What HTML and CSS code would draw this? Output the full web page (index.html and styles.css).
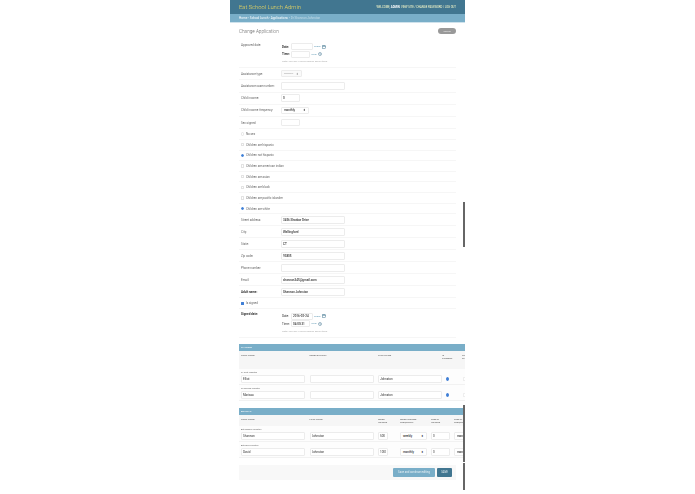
FILE: index.html
```html
<!DOCTYPE html>
<html lang="en">
<head>
    <meta charset="UTF-8">
    <title>Change Application</title>
    <link rel="stylesheet" href="styles.css">
</head>
<body>
    <div class="page">
        <div class="header">
            <div class="branding">Eat School Lunch Admin</div>
            <div class="user-tools">WELCOME, <b>ADMIN</b>. VIEW SITE / CHANGE PASSWORD / LOG OUT</div>
        </div>
        <div class="breadcrumbs"><span>Home › School Lunch › Applications ›</span> Dr Shannon Johnston</div>
        <div class="content">
            <div class="title-row">
                <h1>Change Application</h1>
                <span class="history">HISTORY</span>
            </div>

            <div class="row date-row">
                <label>Approved date:</label>
                <div class="datetime">
                    <div class="dt-line"><b>Date:</b><input class="dt-input" value=""><a>Today</a>
                        <svg class="dt-icon" viewBox="0 0 16 16"><rect x="2" y="3" width="12" height="11" fill="none" stroke="#417690" stroke-width="2"/><path d="M2 6h12M5 1v3M11 1v3" stroke="#417690" stroke-width="2"/></svg>
                    </div>
                    <div class="dt-line"><b>Time:</b><input class="dt-input short" value=""><a>Now</a>
                        <svg class="dt-icon" viewBox="0 0 16 16"><circle cx="8" cy="8" r="6" fill="none" stroke="#417690" stroke-width="2"/><path d="M8 4v4l3 2" fill="none" stroke="#417690" stroke-width="1.5"/></svg>
                    </div>
                    <div class="help">Note: You are 7 hours behind server time.</div>
                </div>
            </div>
            <div class="row"><label>Assistance type:</label><div class="select pale w21"><span>---------</span><i>⬍</i></div></div>
            <div class="row"><label>Assistance case number:</label><input class="w64"></div>
            <div class="row"><label>Child income:</label><input class="w19 strong" value="0"></div>
            <div class="row"><label>Child income frequency:</label><div class="select w28"><span>monthly</span><i>⬍</i></div></div>
            <div class="row"><label>Sex signed:</label><input class="w19"></div>

            <div class="row check-row"><span class="radio"></span>No sex</div>
            <div class="row check-row"><span class="box"></span>Children are hispanic</div>
            <div class="row check-row"><span class="radio on"></span>Children not hispanic</div>
            <div class="row check-row"><span class="box"></span>Children are american indian</div>
            <div class="row check-row"><span class="box"></span>Children are asian</div>
            <div class="row check-row"><span class="box"></span>Children are black</div>
            <div class="row check-row"><span class="box"></span>Children are pacific islander</div>
            <div class="row check-row"><span class="radio on"></span>Children are white</div>

            <div class="row tight"><label>Street address:</label><input class="w64 strong" value="3456 Shadow Drive"></div>
            <div class="row tight"><label>City:</label><input class="w64 strong" value="Wallingford"></div>
            <div class="row tight"><label>State:</label><input class="w64 strong" value="CT"></div>
            <div class="row tight"><label>Zip code:</label><input class="w64 strong" value="93805"></div>
            <div class="row tight"><label>Phone number:</label><input class="w64"></div>
            <div class="row tight"><label>Email:</label><input class="w64 strong" value="shannon345@gmail.com"></div>
            <div class="row tight"><label class="required">Adult name:</label><input class="w64 strong" value="Shannon Johnston"></div>
            <div class="row check-row signed-row"><span class="box on"></span>Is signed</div>
            <div class="row date-row signed">
                <label class="required">Signed date:</label>
                <div class="datetime">
                    <div class="dt-line"><span>Date:</span><input class="dt-input strong" value="2016-02-24"><a>Today</a>
                        <svg class="dt-icon" viewBox="0 0 16 16"><rect x="2" y="3" width="12" height="11" fill="none" stroke="#417690" stroke-width="2"/><path d="M2 6h12M5 1v3M11 1v3" stroke="#417690" stroke-width="2"/></svg>
                    </div>
                    <div class="dt-line"><span>Time:</span><input class="dt-input short strong" value="04:00:31"><a>Now</a>
                        <svg class="dt-icon" viewBox="0 0 16 16"><circle cx="8" cy="8" r="6" fill="none" stroke="#417690" stroke-width="2"/><path d="M8 4v4l3 2" fill="none" stroke="#417690" stroke-width="1.5"/></svg>
                    </div>
                    <div class="help">Note: You are 7 hours behind server time.</div>
                </div>
            </div>

            <div class="inline children">
                <h2>CHILDREN</h2>
                <div class="thead">
                    <span>FIRST NAME</span><span>MIDDLE INITIAL</span><span>LAST NAME</span><span>IS<br>STUDENT</span><span>FOSTER<br>CHILD</span>
                </div>
                <div class="item">
                    <div class="item-title">#1 Elliot Johnston</div>
                    <div class="cells">
                        <input value="Elliot"><input><input value="Johnston"><span class="cell-dot"><span class="radio on"></span></span><span class="cell-dot"><span class="box"></span></span>
                    </div>
                </div>
                <div class="item">
                    <div class="item-title">#2 Marissa Johnston</div>
                    <div class="cells">
                        <input value="Marissa"><input><input value="Johnston"><span class="cell-dot"><span class="radio on"></span></span><span class="cell-dot"><span class="box"></span></span>
                    </div>
                </div>
            </div>

            <div class="inline adults">
                <h2>ADULT FS</h2>
                <div class="thead">
                    <span>FIRST NAME</span><span>LAST NAME</span><span>WORK<br>INCOME</span><span>WORK INCOME<br>FREQUENCY</span><span>PUBLIC<br>INCOME</span><span>PUBLIC INCOME<br>FREQUENCY</span>
                </div>
                <div class="item">
                    <div class="item-title">Adt Shannon Johnston</div>
                    <div class="cells">
                        <input value="Shannon"><input value="Johnston"><input value="500"><div class="select"><span>weekly</span><i>⬍</i></div><input value="0"><div class="select"><span>monthly</span><i>⬍</i></div>
                    </div>
                </div>
                <div class="item">
                    <div class="item-title">Adt David Johnston</div>
                    <div class="cells">
                        <input value="David"><input value="Johnston"><input value="1000"><div class="select"><span>monthly</span><i>⬍</i></div><input value="0"><div class="select"><span>monthly</span><i>⬍</i></div>
                    </div>
                </div>
            </div>

            <div class="submit-row">
                <span class="btn light">Save and continue editing</span>
                <span class="btn dark">SAVE</span>
            </div>
        </div>
    </div>
    <div class="scroll-mark one"></div>
    <div class="scroll-mark two"></div>
    <div class="scroll-mark three"></div>
</body>
</html>
```

FILE: styles.css
```css
* {
    box-sizing: border-box;
}
body {
    margin: 0;
    background: #fff;
    height: 494px;
    overflow: hidden;
    font-family: Roboto, "Liberation Sans", sans-serif;
    font-size: 3px;
    color: #333;
}
.page {
    width: 235px;
    margin-left: 230px;
    overflow: hidden;
    filter: blur(0.3px);
}
.header {
    height: 14px;
    background: #417690;
    padding: 0 9px;
    display: flex;
    justify-content: space-between;
    align-items: center;
}
.branding {
    font-size: 5.8px;
    font-weight: 300;
    color: #f5dd5d;
}
.user-tools {
    font-size: 2.75px;
    color: #ffffcc;
}
.user-tools b {
    color: #fff;
}
.breadcrumbs {
    height: 9px;
    background: #79aec8;
    color: #c4dce8;
    padding: 0 9px;
    display: flex;
    align-items: center;
    gap: 1px;
    font-size: 3.1px;
    border-bottom: 1px solid #cfe2ec;
}
.breadcrumbs span {
    color: #fff;
}
.content {
    padding: 0 9px;
}
.title-row {
    height: 16px;
    display: flex;
    justify-content: space-between;
    align-items: center;
}
h1 {
    margin: 0;
    font-size: 4.7px;
    font-weight: 300;
    color: #666;
}
.history {
    width: 18px;
    height: 6px;
    border-radius: 3px;
    background: #999;
    color: #eee;
    font-size: 2px;
    display: flex;
    align-items: center;
    justify-content: center;
}
.row {
    height: 12.25px;
    padding-left: 2px;
    display: flex;
    align-items: center;
    border-bottom: 1px solid #f6f6f6;
    color: #666;
}
.row.tight {
    height: 12px;
}
.row label {
    width: 40px;
    flex: none;
}
.required {
    font-weight: 700;
    color: #333;
}
input {
    display: block;
    height: 7.5px;
    padding: 0 1px;
    margin: 0;
    border: 0.4px solid #ececec;
    border-radius: 1px;
    background: #fff;
    font-family: inherit;
    font-size: 3px;
    color: #333;
    outline: none;
}
.strong {
    font-weight: 500;
}
.w64 {
    width: 64px;
}
.w19 {
    width: 19px;
}
.w21 {
    width: 21px;
}
.w28 {
    width: 28px;
}
.select {
    height: 7.5px;
    display: flex;
    justify-content: space-between;
    align-items: center;
    padding: 0 2px;
    border: 0.4px solid #ececec;
    border-radius: 1px;
    background: #fff;
    color: #333;
    font-weight: 500;
}
.select i {
    font-style: normal;
    font-size: 3px;
}
.select.pale {
    color: #999;
    background: #fafafa;
}
.date-row {
    height: 29px;
    align-items: flex-start;
}
.date-row label {
    padding-top: 4px;
}
.date-row.signed {
    height: 28.5px;
}
.signed label {
    padding-top: 2.5px;
}
.datetime {
    display: flex;
    flex-direction: column;
    padding-top: 4px;
    padding-left: 1px;
    color: #333;
}
.signed .datetime {
    padding-top: 3px;
}
.dt-line {
    height: 7.5px;
    margin-bottom: 0.2px;
    display: flex;
    align-items: center;
}
.dt-line b,
.dt-line span {
    width: 9px;
}
.dt-input {
    width: 21.5px;
    height: 7px;
}
.dt-input.short {
    width: 19px;
}
.dt-line a {
    color: #5f99b5;
    margin-left: 1.5px;
    font-size: 2.5px;
}
.dt-icon {
    width: 4px;
    height: 4px;
    margin-left: 1.5px;
}
.help {
    margin-top: 2px;
    font-size: 2.5px;
    color: #aaa;
}
.check-row {
    height: 10.65px;
    gap: 1.5px;
}
.signed-row {
    height: 11px;
}
.radio,
.box {
    width: 3.4px;
    height: 3.4px;
    flex: none;
    border: 0.3px solid #e2e2e2;
    background: #fff;
}
.radio {
    border-radius: 50%;
}
.box {
    border-radius: 0.5px;
}
.radio.on,
.box.on {
    background: #3f7fd6;
    border-color: #3f7fd6;
}
.inline {
    width: 226px;
}
.children {
    margin-top: 6px;
}
.adults {
    margin-top: 6.5px;
}
h2 {
    margin: 0;
    height: 7.5px;
    padding-left: 2px;
    background: #79aec8;
    color: #fff;
    font-size: 2.4px;
    font-weight: 400;
    line-height: 7.5px;
}
.thead {
    display: grid;
    background: #f6f6f6;
    padding: 2.5px 2px 0;
    color: #666;
    font-size: 2.4px;
    line-height: 3px;
    font-weight: 500;
}
.children .thead {
    height: 18px;
}
.adults .thead {
    height: 11px;
}
.children .thead,
.children .cells {
    grid-template-columns: 68.5px 68.5px 64px 20px 15px;
}
.adults .thead,
.adults .cells {
    grid-template-columns: 68.5px 68.5px 22px 31px 23px 30px;
}
.item {
    height: 16px;
    padding: 1.5px 2px 0;
    background: #fdfdfd;
    border-bottom: 0.4px solid #f2f2f2;
}
.item-title {
    font-size: 2px;
    line-height: 3px;
    color: #666;
}
.cells {
    display: grid;
    align-items: center;
    margin-top: 1.5px;
}
.cells input {
    width: 64px;
}
.adults .cells input:nth-child(3) {
    width: 10px;
}
.adults .cells input:nth-child(5) {
    width: 18.5px;
}
.adults .cells .select {
    width: 27px;
}
.adults .cells .select:last-child {
    width: 30px;
}
.cell-dot {
    display: flex;
    padding-left: 4px;
}
.cell-dot .box {
    border-color: #eee;
    margin-left: -3px;
}
.submit-row {
    margin-top: 6.5px;
    height: 15px;
    width: 217px;
    background: #f8f8f8;
    padding-right: 4px;
    display: flex;
    justify-content: flex-end;
    align-items: center;
    gap: 2px;
}
.btn {
    height: 8.5px;
    display: flex;
    align-items: center;
    justify-content: center;
    border-radius: 1px;
    color: #e8f1f5;
    font-size: 2.8px;
}
.btn.light {
    width: 42px;
    background: #79aec8;
}
.btn.dark {
    width: 15px;
    background: #417690;
}
.scroll-mark {
    position: absolute;
    left: 463px;
    width: 1.5px;
    background: #666;
}
.scroll-mark.one {
    top: 202px;
    height: 45px;
}
.scroll-mark.two {
    top: 405px;
    height: 57px;
}
.scroll-mark.three {
    top: 463px;
    height: 27px;
}
```
